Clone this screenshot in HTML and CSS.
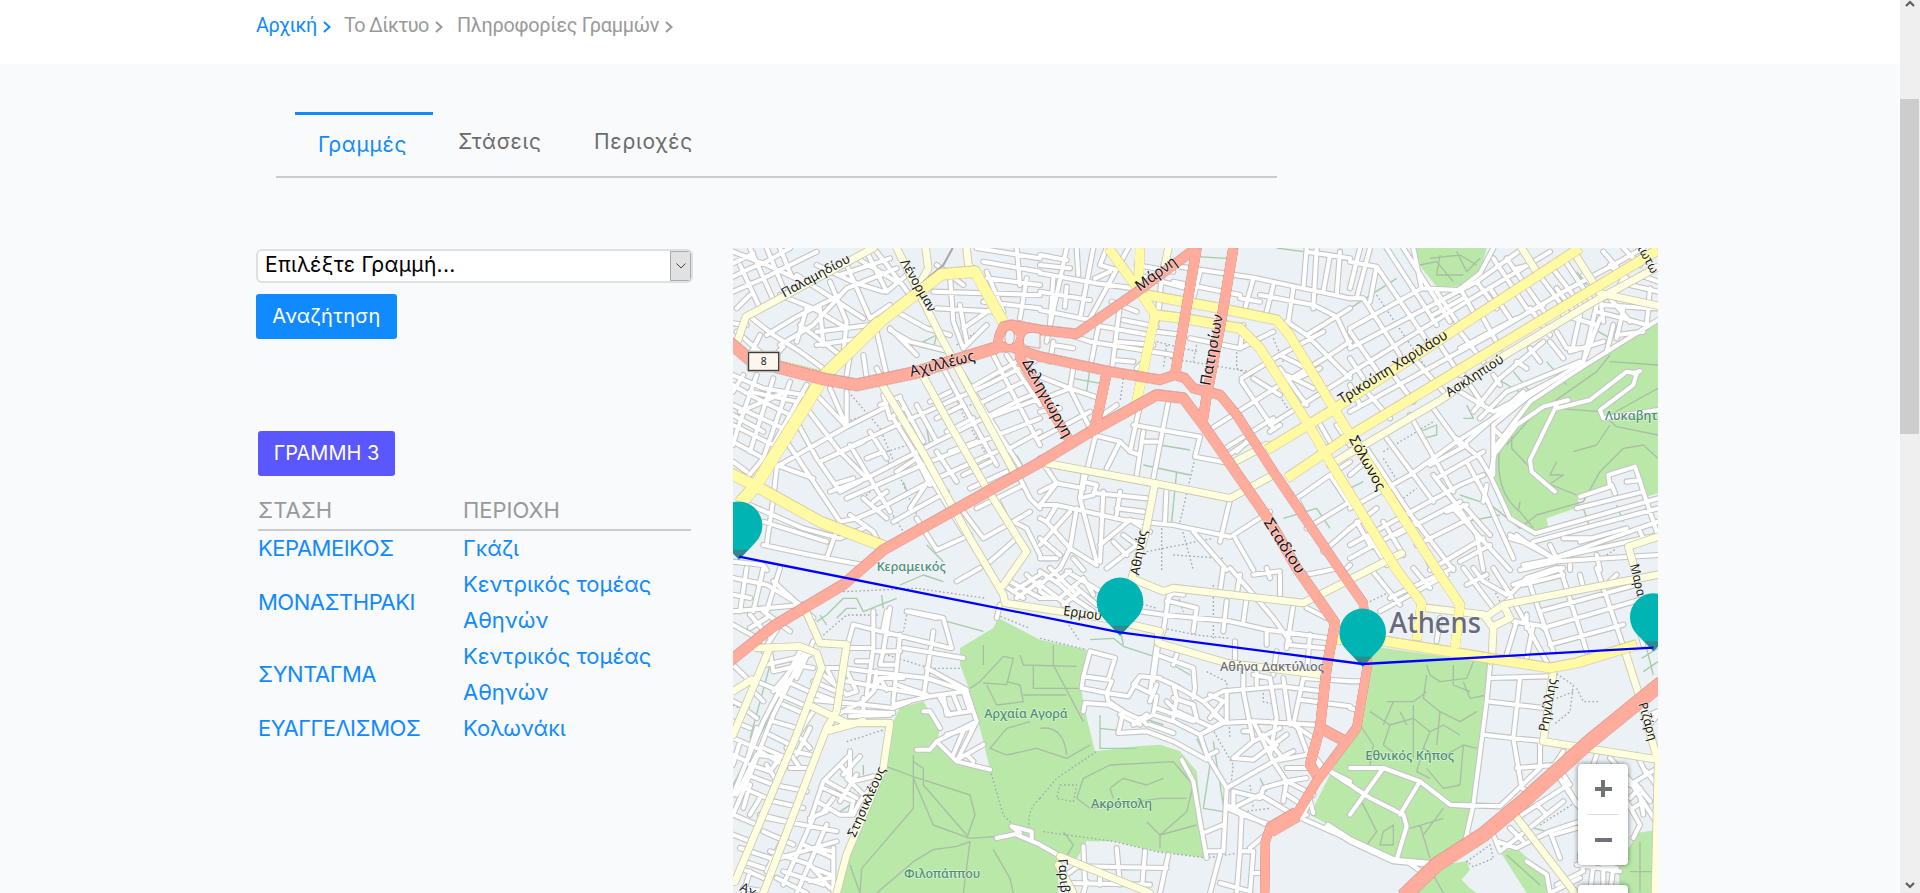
FILE: index.html
```html
<!DOCTYPE html>
<html lang="el">
<head>
<meta charset="utf-8">
<title>Πληροφορίες Γραμμών</title>
<link rel="stylesheet" href="styles.css">
</head>
<body>
<div class="window">
<div class="page">
  <nav class="crumbs">
    <a class="crumb home">Αρχική<svg class="chev" viewBox="0 0 8 12"><path d="M1 1l5.500 5L1 11"/></svg></a>
    <a class="crumb net">Το Δίκτυο<svg class="chev" viewBox="0 0 8 12"><path d="M1 1l5.500 5L1 11"/></svg></a>
    <a class="crumb info">Πληροφορίες Γραμμών<svg class="chev" viewBox="0 0 8 12"><path d="M1 1l5.500 5L1 11"/></svg></a>
  </nav>
  <main class="content">
    <div class="tabs">
      <a class="tab active">Γραμμές</a>
      <a class="tab stops">Στάσεις</a>
      <a class="tab areas">Περιοχές</a>
    </div>
    <div class="columns">
      <section class="side">
        <div class="select"><span class="select-text">Επιλέξτε Γραμμή...</span><span class="select-btn"><svg viewBox="0 0 10 6"><path d="M.5.5L5 5 9.500.5"/></svg></span></div>
        <button class="search">Αναζήτηση</button>
        <div class="line-name">ΓΡΑΜΜΗ 3</div>
        <table class="stations">
          <thead><tr><th class="h-stop">ΣΤΑΣΗ</th><th class="h-area">ΠΕΡΙΟΧΗ</th></tr></thead>
          <tbody>
            <tr><td class="stop">ΚΕΡΑΜΕΙΚΟΣ</td><td>Γκάζι</td></tr>
            <tr><td class="stop">ΜΟΝΑΣΤΗΡΑΚΙ</td><td>Κεντρικός τομέας<br>Αθηνών</td></tr>
            <tr><td class="stop">ΣΥΝΤΑΓΜΑ</td><td>Κεντρικός τομέας<br>Αθηνών</td></tr>
            <tr><td class="stop">ΕΥΑΓΓΕΛΙΣΜΟΣ</td><td>Κολωνάκι</td></tr>
          </tbody>
        </table>
      </section>
      <section class="map">
<svg class="map-svg" viewBox="9 9 2775 1935" width="925" height="645">
  <defs>
    <g id="minor">
      <path d="M9 20L110 60 230 115M9 95L60 70 110 50 180 9M9 140L90 105 260 20M60 9L130 165M110 9L160 130M30 60L90 190M150 9L185 95M9 55L70 25M60 215L130 270 210 320 300 385M20 260L100 330M110 270L200 215 330 150M150 150L250 190 350 250M200 90L400 220M260 60L380 115 460 140M300 110L350 230 340 330M350 60L420 220M230 190L200 290M260 260L420 240M260 300L400 280M150 300L250 240 350 130 500 70M410 20L470 140 530 90M440 20L540 150M9 235L50 240M90 270L60 330M160 305L100 370M210 240L330 330M60 150L20 190M270 190L280 300M420 220L480 180M330 90L480 40M390 45L500 110"/>
      <path d="M9 420L60 450 200 520M9 480L180 560M9 540L150 610M9 590L120 650M40 390L9 440M80 390L20 560 9 600M130 400L60 620M180 410L100 640 50 700M9 650L50 680M9 510L100 560M60 440L200 470M230 420L130 600M30 500L170 440M9 390L100 430 220 450"/>
      <path d="M260 450L350 545M230 490L330 620 410 700M350 440L350 545 140 665M300 430L350 545M200 530L260 640 330 740M170 590L290 770 330 830M140 660L250 700M350 545L460 490M330 620L500 540 770 420 930 340M270 650L400 590M410 700L620 590 880 460 930 440M300 740L410 700M330 830L380 820M330 740L390 710M410 640L460 620M350 760L600 650 930 520M380 820L450 790 620 700 800 620M490 830L650 740M140 670L130 760 110 900M60 780L220 850 330 880 400 850M100 830L290 890M330 830L290 940M100 900L240 930 400 960M360 810L430 860 450 900M400 760L470 820M320 715L370 700M460 450L480 520M450 480L510 455M480 520L520 490M420 560L470 640M360 600L480 800M490 520L620 730 700 860M540 600L600 720M560 640L500 680M560 820L620 915 720 870M600 700L540 790M430 770L470 740M400 330L410 400M440 370L460 410M440 260L470 390M360 330L350 390M480 250L560 330M500 200L590 250 660 270M480 255L540 290 660 320M660 90L670 230 700 310 770 240M610 140L930 150M620 190L800 200M690 180L710 290M620 60L700 120M770 80L820 200M770 100L930 120M740 9L930 40M760 50L930 80M860 9L870 120M890 100L870 220M760 170L930 190M790 130L800 180M700 250L800 180M640 370L700 480 800 660M700 390L760 490 880 680M790 330L840 430 930 600M830 330L930 480M720 430L860 350M740 480L880 410M770 520L930 460M600 470L660 440M620 520L700 480M650 560L730 520M820 620L930 560M660 620L740 590M700 690L780 650M720 730L830 680M620 620L680 710M510 460L580 590M560 480L620 590M870 700L900 760 930 790M740 790L880 720M700 800L760 880 850 830 890 850 930 930M800 760L830 820M850 830L900 800M780 950L860 880M9 950L100 960 110 975"/>
      <g transform="translate(930 0)">
        <path d="M0 30L80 45M0 85L170 115 280 130M0 140L150 165M0 195L150 225M110 9L115 90M80 9L20 290M160 9L120 220M265 9L150 220M200 9L180 60 230 75M165 100L210 80M80 125L75 185M240 180L215 380M180 220L150 370M250 225L350 245M160 240L330 270M150 290L400 330M230 290L340 300M40 290L30 350M60 260L150 290M40 300L100 310M220 345L280 350M215 170L290 200M0 60L90 70M40 100L30 240"/>
        <path d="M100 370L90 430 0 465M0 395L90 430 150 550M90 430L180 460M0 580L150 500M0 500L60 490M160 570L240 590 270 620M165 580L120 760M240 590L200 670M300 480L270 620M310 560L290 690M280 540L480 575M385 470L340 700M480 575L465 635 570 655M310 590L350 590M270 620L300 630M230 480L160 530M320 340L290 370"/>
        <path d="M0 640L50 715 130 730M50 715L0 740M120 760L170 950M130 690L120 760 160 750 170 720 130 710M50 780L250 825 400 840 570 875M190 740L180 950M240 740L230 810M170 745L320 760M230 790L310 800M50 715L0 780 50 780 20 830 0 820M20 830L90 910M0 900L90 800M110 790L90 910 170 960M0 880L60 930M180 900L270 825 330 860M250 870L290 900 200 970M220 890L260 930M460 860L560 975M570 765L540 890M580 870L640 975M580 870L690 800M0 940L50 940M60 970L90 910M100 940L130 975M380 720L375 830"/>
        <path d="M420 65L650 100 930 160M400 110L600 150M310 95L440 130M640 100L610 210M700 120L680 200M760 130L745 230M800 9L790 130M830 9L820 190M870 30L850 140M800 20L930 40M660 150L820 180 890 215M600 160L660 170M800 270L890 215 930 190M890 215L930 300M740 230L800 270 930 400M720 330L850 260M350 260L430 270M360 170L350 230M450 280L600 310 610 240M600 310L660 280 700 260M370 60L350 230M480 80L460 160M900 20L890 150M290 60L400 80"/>
        <path d="M605 400L720 330 800 370 830 400M605 410L700 550M640 400L720 450M500 560L720 420 870 330 930 290M540 620L700 520M550 640L640 580M720 370L800 480M740 390L820 430M690 540L850 440 930 390M720 590L830 520M770 400L840 370M590 620L620 590M770 760L870 690 930 650M770 760L790 800M800 850L930 770M850 920L930 850M870 690L930 780M830 520L870 590M890 540L930 600M860 610L930 570M920 970L930 960M690 560L720 540"/>
      </g>
      <g transform="translate(1860 0)">
        <path d="M0 50L80 65 240 300M60 9L20 160M30 9L0 130M110 9L260 240M160 9L300 230M0 160L40 160 150 330M0 250L215 130 325 135 390 85 430 9M215 130L190 9M0 310L380 110 520 9M0 385L350 170 600 20M0 260L90 390M0 340L40 400M260 140L320 230M330 130L370 200M380 110L440 190M420 130L480 220M430 40L530 190M470 40L590 210M560 80L650 200M600 60L700 190M640 40L720 160M80 65L60 170M250 210L340 160M500 70L540 60M540 200L580 180"/>
        <path d="M0 500L200 390 420 270 640 140 790 60 880 9M50 440L120 520M130 390L190 470M200 350L280 440M270 300L330 390M330 260L400 350M400 220L450 310M330 310L500 220M0 420L30 480M540 190L600 270M620 130L680 210M700 90L760 160M780 60L830 110M760 20L830 100M820 9L870 60"/>
        <path d="M50 610L190 820 310 975M110 580L250 770M180 510L310 740M250 490L330 600M0 790L180 690 320 590 700 350M0 900L330 720 400 690M0 850L80 790M320 580L390 640 420 690M240 660L350 600M260 700L400 620M140 870L330 770M0 940L200 830M250 690L320 780 380 870 400 975M350 650L400 740 490 940M310 790L480 975M290 800L350 780M200 900L360 820M240 975L400 880M400 770L410 720M340 780L420 870M100 830L160 930M60 880L110 960M0 690L60 640M200 870L240 960M20 830L60 900M420 900L330 950"/>
        <path d="M330 440L430 500M370 500L450 400 580 290M390 520L470 440 690 350M350 590L520 440M430 500L640 390M340 390L400 480M430 390L450 420M500 350L530 370M540 310L570 350M600 290L640 340M620 260L650 310 700 310M430 630L430 540 540 450M430 550L450 570M430 640L430 690M690 370L700 350 740 180M750 150L760 230M640 210L740 240M690 210L670 300M740 200L820 220 890 240M760 180L900 190 924 190M790 240L770 320M800 270L880 260M840 120L924 140M820 190L800 280M900 130L890 240M830 70L810 120M870 90L924 110M750 220L700 350M780 160L840 230M660 320L760 290"/>
        <path d="M924 225L690 370 540 470 440 600 420 690 480 820 555 865 924 760M480 880L550 900 610 940 924 870M480 870L610 940M550 890L924 790M600 900L620 940M610 940L924 830M640 880L730 880M500 870L540 900M520 960L600 945M740 930L750 975M600 950L924 930M680 790L880 740M690 755L780 725 775 690 855 665 920 860M785 720L795 745M690 890L830 850M870 860L880 880M660 960L660 975M830 710L870 705M510 975L620 950"/>
        <path d="M655 465L580 485 500 540 440 620M620 480L540 645 545 680 615 740M620 490L720 465 830 380 860 385 850 420 750 495 760 520 924 495M870 378L850 385"/>
      </g>
      <g transform="translate(0 969)">
        <path d="M9 30L110 50 210 110M9 130L220 110M150 0L110 130M100 0L70 130M50 0L30 130M130 40L250 150M9 80L60 90M100 130L180 190M60 140L120 210M9 170L100 220M150 170L100 250M60 180L110 150M9 290L50 330M110 290L240 260M120 250L130 310 220 290M80 340L150 370 210 300M130 370L220 260M70 370L100 400M9 400L50 420"/>
        <path d="M230 240L130 440 60 620 9 740M215 240L100 460 9 680M250 220L200 330"/>
        <path d="M9 460L60 480M9 510L80 540M9 560L50 580 80 480M40 420L80 450M30 520L9 590M130 460L200 480M120 500L180 530M100 540L170 570M90 550L160 590M60 590L120 610 150 570 80 560M50 620L130 650M40 660L110 690M9 740L80 770M9 800L60 820M30 840L120 870M40 880L100 900M30 900L100 930M170 340L280 390M150 380L240 420M190 290L250 300M160 410L230 440M20 680L80 560M60 650L40 720M110 590L140 640M90 690L60 740M130 650L230 670M110 750L320 790M190 750L110 910M250 750L160 950M290 770L200 975M100 790L190 830M120 850L240 890 300 960M150 870L320 820M160 910L280 950M240 840L310 850M310 840L310 975M220 830L310 870M90 740L170 760M130 700L220 720M200 500L240 540M190 550L240 560M180 600L230 600M240 480L200 560M210 600L170 540M250 430L210 490M40 960L100 970M60 910L40 975M140 930L230 975M250 900L300 920M240 940L300 930"/>
        <path d="M270 300L330 300M280 320L350 380 380 370 350 310M290 300L310 340M240 370L320 400M250 340L320 370M240 395L400 410 490 420 540 400M320 440L400 400 430 370 450 330 520 330M350 430L490 435M360 445L480 440M400 390L400 450M340 300L410 310 590 330 710 370M350 340L580 380M360 240L420 240M370 170L660 240M370 170L350 240M430 130L430 240 410 380M480 120L460 250 450 290M460 180L470 130M540 130L640 150 665 240M530 130L620 150M510 200L490 400M610 190L580 390M450 330L470 365M590 300L710 365M500 350L590 380M450 290L500 290M380 280L420 280M440 310L430 370M520 240L700 270M440 250L510 250M490 410L600 385 710 370 740 460M640 380L650 440 720 430M670 380L690 430M700 370L720 430M630 390L660 440M580 430L600 430 630 480M560 545L600 545 620 520 740 460M620 520L680 580 780 605M700 490L670 560M740 460L680 580M650 500L720 480M690 570L760 530M710 560L730 580M330 430L300 470"/>
        <path d="M360 560L280 640 240 760M280 660L370 700 360 740M330 590L370 640 430 625M360 550L360 620M390 565L340 620M290 640L380 690M380 620L330 700M260 700L330 740 370 740 390 700 430 650M310 690L280 730M240 750L290 730M350 630L400 680M680 40L750 0M820 50L880 90M840 40L930 90M850 70L930 20M860 90L930 40M800 150L810 110M890 20L930 60"/>
        <path d="M800 810L870 795 845 775 905 790 905 815M860 800L930 830 1000 870"/>
      </g>
      <g transform="translate(930 969)">
        <path d="M0 10L60 50 100 90M0 50L80 110M0 90L60 90 130 30M30 0L110 80M60 0L0 50M80 10L180 70M110 60L170 110M130 30L160 80M50 40L90 10M100 90L160 130M70 110L120 70M0 70L30 90"/>
        <path d="M390 60L370 190 355 225 340 340M300 130L370 140 570 160 680 185 860 210M390 100L470 120 460 190M390 75L430 80M400 70L380 100M560 100L550 190M620 90L610 160M550 0L540 70M600 20L590 80M570 0L640 80 700 150 750 220M690 30L680 0M720 20L720 80M640 20L720 10M760 110L740 240M800 120L860 150M810 200L800 320M680 185L680 230M585 220L585 280M710 250L700 320M800 20L900 0M740 230L850 240"/>
        <path d="M150 250L225 270 205 335 130 325 150 250M130 325L125 360 200 375 265 385 300 325 360 330M300 325L280 350 330 375 350 230M200 375L205 400 250 430 235 495 320 490 400 520 500 575M130 430L135 405 205 410 290 450M215 340L200 375M350 260L460 300 465 360 460 390M355 330L400 350 490 400 550 460 520 440M410 260L400 290M350 350L330 400M350 385L340 440 280 470 320 440M340 440L400 460 480 500M400 390L460 410 470 450M380 400L410 430 520 480M410 390L400 450M490 400L550 370 720 355 850 370M510 380L550 400 510 450M560 370L560 460M350 420L460 460M300 450L320 470M240 440L300 470M330 470L400 495M400 350L410 390"/>
        <path d="M480 500L550 465 640 460 820 470M480 500L500 560 560 660 550 850M610 310L610 370 640 520M690 330L710 450 690 560M730 330L750 470M790 330L760 470M640 320L690 330M550 460L480 500M650 310L650 350M780 395L930 415M790 330L930 340M580 570L640 520 720 480M580 570L640 575 740 500M640 460L700 580 800 560 850 610M560 660L700 580 760 550M700 580L740 640 820 680M740 600L830 600M670 660L740 640 800 630M670 660L660 690 580 670 580 710M560 710L700 780 730 750M580 720L660 680 760 740 800 740M740 640L730 700M670 500L720 560M770 470L800 550 820 560M690 550L710 530M510 560L530 550M610 490L630 490M760 470L820 510M740 680L800 720M820 560L850 600M870 610L930 650M700 780L630 840M605 740L600 850 640 850 630 975M600 850L590 975M500 850L550 850M490 795L550 770M560 720L605 740 690 770M640 915L670 915"/>
        <path d="M425 575L460 640 480 760 500 870M130 835L135 940M230 840L240 950M315 850L305 975M385 860L360 975M110 895L380 900M80 945L330 950M80 920L120 890M540 860L510 975M540 945L630 970M180 900L180 950M140 940L130 975"/>
        <path d="M760 740L930 815M790 745L840 610M820 735L810 700M870 610L930 640"/>
      </g>
      <g transform="translate(1860 969)">
        <path d="M60 0L150 110M90 130L290 20M120 90L160 70 310 0M190 0L240 60M280 30L250 0M340 0L430 120M370 0L400 40 470 80M430 0L480 80 530 30 620 0M480 80L600 300M540 50L610 250M630 0L710 250M570 130L860 50M580 180L870 95M600 230L820 170M640 20L520 50M740 0L825 250M490 50L640 0M350 50L410 20M490 160L580 175M500 160L470 260M550 170L530 270M530 140L530 180M270 150L260 220M690 20L700 60M480 90L460 110M770 50L800 20M860 160L880 230"/>
        <path d="M420 290L410 400 370 710 345 820M420 330L600 325M410 400L580 420M400 500L580 520M510 330L490 510 515 660M500 600L620 590 660 650M570 530L570 600 450 715 300 710 210 640 100 600 0 600M515 660L550 680M640 550L600 610M740 560L730 590M300 710L370 715M610 600L680 710M350 800L390 810M560 710L590 740M500 750L640 660M640 640L690 720M430 800L450 850 640 700M440 820L500 840 600 790 690 760M600 790L630 870M480 780L520 820M530 880L590 920 600 975M610 800L680 780M620 950L700 910 690 870 800 900M610 970L690 930M690 860L800 870M680 890L810 910M730 890L720 975M760 890L760 975M790 900L780 975M840 640L924 770M870 660L840 690M870 680L880 740M840 650L924 600M830 700L870 770 850 810M780 570L860 660M850 720L880 700M860 560L890 620M890 610L924 660M900 700L860 650M890 480L924 440M900 440L924 430M0 340L30 340M0 420L20 425"/>
        <path d="M100 600L0 740M0 650L60 690 160 740 170 775 140 875M210 640L150 740M-60 610L60 690"/>
        <path d="M-70 775L0 820 130 880 240 890M-66 770L4 815 134 875 240 884M170 880L220 915"/>
      </g>
    </g>
    <g id="light">
      <path d="M20 295L48 215 150 160 430 9M500 9L560 130 640 290 690 380 860 695M460 425L580 625 720 880 820 1049 825 1074 1120 1119 1290 1159M575 385L660 540 770 730 890 920 820 1020M587 9L595 70 570 115M710 9L715 60 735 80"/>
      <path d="M950 655L1275 715 1500 760 1630 690M1275 715L1245 870 1205 1000 1300 1039 1330 1029 1720 1074 1850 1009 2015 925M1505 655L1610 600M1315 9L1305 60M1285 1159L1285 1194 1490 1254 1770 1289"/>
      <path d="M1860 625L2140 460 2325 330 2600 165 2784 65M2375 9L2420 80M2540 35L2610 145 2784 182M2784 875L2695 905 2715 975M1800 660L1880 610"/>
      <path d="M230 1104L270 1194 350 1199 320 1399 290 1449 100 1944M80 1209L210 1204 260 1224 275 1269 200 1469 15 1910M9 1470L115 1219M9 1339L65 1304M235 1379L350 1434 480 1434 460 1569 350 1829 320 1944M290 1459L400 1429"/>
      <path d="M990 1834L1260 1944M985 1860L1030 1944M2090 1089L2260 1109 2290 1149 2285 1249M2270 1114L2320 1079 2784 989M2320 1079L2340 1119 2290 1144M2685 1219L2730 1359 2784 1549M2470 1279L2440 1489 2784 1544M2350 1704L2535 1944M2784 1560L2775 1944"/>
    </g>
    <g id="yellow">
      <path stroke-width="37" d="M30 775L75 725 175 565 280 395 450 230"/>
      <path stroke-width="32" d="M445 235L635 88 735 80 830 250M0 685L75 722 270 830 465 905"/>
      <path d="M1135 9L1230 140 1275 210 1218 480M1230 9L1225 140M1250 150L1470 190 1640 225 1675 265 1860 570 1970 740 2120 975 2190 1079 2175 1209M1275 210L1360 220 1530 250 1590 310 1730 530 1800 650 2000 975 2075 1074 2060 1185"/>
      <path d="M1610 615L1800 500 2550 9M1670 700L1860 572 2784 15M1800 1184L1935 1184 2460 1269 2540 1254 2720 1199"/>
    </g>
    <g id="red">
      <path stroke-width="34" d="M0 293L60 345 280 402 380 420 560 382 800 308"/>
      <path stroke-width="27" d="M800 308L808 270 820 245 845 240 930 255 1040 267 1215 145 1400 9M800 308L840 305 930 335 1140 380 1290 405 1335 390 1365 400 1390 430 1470 450 1520 510 1630 680 1830 975 1900 1075 1913 1259 1880 1449 1760 1609 1700 1709 1620 1749 1606 1790 1604 1944M845 240L878 268 865 305 870 340 1022 592"/>
      <path stroke-width="30" d="M0 1249L130 1144 340 1019 460 915 930 652 1090 555 1280 450 1360 460 1420 540 1620 830 1700 969 1815 1134 1790 1269 1770 1449 1740 1559 1760 1589M1400 9L1335 390M1510 9L1475 220 1428 465 1418 530M1130 385L1095 550M1770 1449L1845 1489"/>
      <path stroke-width="42" d="M2794 1315L2580 1489 2380 1669 2260 1769 2120 1859 2020 1955M1700 1709L1620 1755"/>
    </g>
    <g id="pin"><path fill="#00b4b4" d="M0 0L-48-50A70 72 0 1 1 48-50Z"/><path fill="#31898c" d="M0 0L-27-30H27Z"/></g>
  </defs>

  <path fill="#ebf1f4" d="M9 9H2784V1944H9Z"/>

  <g class="parks">
    <path d="M2784 235L2640 320 2510 400 2400 480 2340 540 2290 620 2280 690 2330 800 2410 858 2455 855 2450 820 2550 785 2540 755 2630 720 2635 690 2720 665 2750 755 2784 745Z"/>
    <path d="M2055 9L2075 70 2120 125 2185 125 2250 80 2270 9Z"/>
    <path d="M805 1119L930 1184 1070 1214 1055 1339 1065 1399 1095 1519 1220 1504 1290 1499 1350 1519 1400 1579 1430 1839 1280 1819 1150 1789 1070 1789 1030 1859 985 1840 985 1944H320L360 1789 460 1569 480 1449 510 1389 580 1369 630 1449 620 1499 680 1549 780 1574 760 1489 720 1339 690 1259 690 1209 790 1149Z"/>
    <path d="M1925 1204L2275 1254 2210 1784 2110 1854 2000 1849 1740 1709 1810 1569 1880 1449Z"/>
    <path d="M2130 1860L2210 1849 2220 1874 2195 1904 2220 1929 2240 1944H2050Z"/>
    <path d="M2310 1819L2360 1809 2445 1889 2450 1944H2390Z"/>
    <path d="M2720 1764L2784 1754V1944H2670L2665 1869Z"/>
  </g>
  <path class="field" d="M1860 1795L2070 1875 1990 1944H1630V1790L1700 1740Z"/>

  <g class="trails">
    <path d="M2270 770L2370 850 2420 810 2560 770 2610 680 2680 610 2740 600 2784 640M2310 600Q2290 740 2370 800L2410 850M2345 540V610L2440 710 2540 750M2640 330L2600 380 2400 520 2330 600M2784 360L2640 350M2784 570L2660 545 2610 500 2480 490M2640 540L2600 600 2530 620M2480 650L2460 690 2500 690 2455 720M2784 430L2640 510M2370 770L2365 800M2070 60L2120 50 2170 110M2100 40L2190 30 2240 60M2130 30L2120 90 2200 90M2180 20L2210 80 2250 40"/>
    <path d="M550 1530V1690L395 1870 390 1944M550 1600L610 1740 720 1780 860 1770M470 1565L550 1595 720 1650 735 1710 710 1780M550 1550L580 1570 580 1620 710 1770M440 1944L550 1850 610 1814 680 1804 720 1790 700 1944M790 1814L840 1900 850 1944M720 1330L750 1310 820 1234 850 1240 830 1319 760 1314M770 1320L800 1380 880 1370 870 1320 830 1310M870 1230L880 1260 1040 1264M910 1264V1330H1050M880 1350H1010M900 1430L830 1450 780 1510 830 1530 920 1510 1010 1540 1080 1500M970 1200V1260L1060 1430M930 1450Q1000 1440 1010 1530M1040 1660L1060 1600 1140 1560 1330 1550 1390 1620 1370 1700 1290 1770 1290 1810M1040 1660L1080 1690 1290 1660 1370 1660M1140 1630L1180 1600 1250 1620 1300 1600M1140 1630L1150 1660M1250 1730L1290 1770 1400 1740M760 1200V1260M390 1944L360 1860M1000 1760L1030 1800 1000 1850"/>
    <path d="M2090 1260L2100 1290 2130 1310 2210 1300 2230 1250M1970 1370L2050 1370 2090 1340M1920 1400L1980 1440 1960 1500 2000 1530M2090 1290L2080 1360 2130 1400 2190 1430 2240 1400M1980 1440L2050 1420 2100 1460 2080 1510 2130 1540 2200 1500 2240 1510M2050 1380V1540M2100 1460L2140 1440 2190 1470M2130 1400L2120 1500M2200 1310L2220 1360 2270 1350M2200 1500L2190 1620 2140 1630 2090 1570M1890 1440L1930 1500 1920 1560M1990 1370L1960 1440M2080 1510L2060 1580 2100 1600M2170 1260V1320L2220 1340M2010 1400L2030 1440M1890 1660L1940 1760 1910 1800M2040 1750L2140 1720M2070 1740L2100 1840M1960 1760L1990 1740 1990 1800 1950 1800ZM2140 1690L2080 1770M2140 1944L2110 1890M2330 1830L2430 1920M2700 1880H2784M2730 1790V1940"/>
  </g>
  <g class="green-trails">
    <path d="M580 290L620 270 610 310ZM590 550L600 600M460 620L480 660M520 710L535 750M860 630L880 665M590 900L640 950M855 830L890 810M1400 35L1490 40M1030 400L1110 415M1080 370L1070 440M1290 600L1380 615M1240 660L1380 690M1340 680L1325 830M1660 820L1760 790M1760 790L1800 850M1640 9L1720 20M1860 190L2000 100M2210 480L2230 520 2200 520M2070 560L2120 540 2120 570 2080 580ZM1860 730L1900 710M2300 400L2400 460M2350 380L2400 440M2450 350L2510 420M2190 750L2250 770M2210 830L2310 810M2590 250L2640 280M2540 80L2570 120M2560 790L2580 850M2660 780L2680 830"/>
    <path d="M260 1130L290 1110 340 1060 380 1060 400 1100 500 1060M290 1140L270 1110M320 1120L350 1090 380 1090M455 1050L460 1090M510 1020L580 990 640 1010M650 1129L760 1159M9 1620L220 1230M120 1260L60 1480M1080 1184L1150 1180 1180 1204 1290 1240M1170 1150L1180 1200M1400 1480L1440 1560 1420 1690 1480 1700M1450 1490L1480 1680M1330 1260L1380 1290M1110 1410V1510H1220M1110 1450L1200 1460M1590 1600L1610 1640M1300 1310L1350 1320M1180 1400L1300 1440M2735 1240L2784 1210M2740 1280L2784 1250M2750 1210L2770 1290M360 1680L330 1700M400 1590V1560M2380 1740L2450 1760"/>
  </g>
  <g class="dots">
    <path d="M355 440L450 550 520 720 570 830M350 530L480 485M640 370L700 510 780 650M660 490L780 470M470 620L550 595M360 640L420 700 520 860M500 770L610 710M400 760L450 710M680 300L740 260M1280 290L1400 320M1310 300L1300 370M1320 340L1560 380M1400 300L1390 350M1520 310L1520 370 1640 440 1680 500M1395 640L1350 830 1390 975M1180 400L1170 470M1295 850V975M1250 920L1450 880M1330 930L1480 940M1630 280L1660 350M1940 150L2130 430M1960 620L2110 530M1960 640L2010 720M2020 760L2060 730M2600 950L2660 910"/>
    <path d="M280 1170L350 1110 450 1110M340 1040L560 1030 770 1060M530 1110L520 1160M440 1220L600 1270 690 1270M350 1490L460 1455M780 1574L820 1710 850 1740M930 1660Q880 1700 905 1780M930 1660L980 1600 1100 1519M940 1760L1150 1789 1280 1820 1430 1839 1520 1825M990 1620L1040 1620 1030 1670 980 1660ZM930 1180L1070 1214M800 1110L900 1150M1010 1130L1050 1190M1110 1040L1280 1090M1340 1040L1360 1100M1450 1020V1180M1300 1150L1400 1170 1500 1180M1430 1280L1490 1310 1500 1480M1600 1320V1370L1640 1380M1440 1440L1510 1560 1500 1640M1560 1620L1570 1690M1540 1700L1620 1690M2470 1280L2530 1320 2520 1400 2470 1440M2540 1330L2560 1370H2610M2480 1360L2530 1340M2430 1740L2540 1670M1920 1070L1980 1040M2270 990L2310 1070M2210 1850L2280 1800 2290 1840 2230 1865ZM9 1380L100 1420"/>
  </g>

  <use href="#minor" class="casing minor-casing"/>
  <use href="#minor" class="fill minor-fill"/>
  <use href="#light" class="casing light-casing"/>
  <use href="#light" class="fill light-fill"/>
  <path class="rail" d="M580 110L640 60 668 9"/>
  <path class="side-lane" d="M150 348L300 384M140 382L280 416"/>
  <use href="#yellow" class="fill yellow-fill"/>
  <use href="#red" class="fill red-fill"/>
  <path fill="#ebf1f4" stroke="#d28078" stroke-width="2" d="M825 275q3-22 17-20 12 3 11 22-1 22-15 22-15-2-13-24ZM880 290q0-30 28-28l22 3v45l-35-6q-15-3-15-14Z"/>

  <g class="labels">
    <text transform="translate(163 158) rotate(-28.500)" textLength="228" lengthAdjust="spacingAndGlyphs" font-size="39">Παλαμηδίου</text>
    <text transform="translate(510 52) rotate(60)" textLength="175" lengthAdjust="spacingAndGlyphs" font-size="39">Λένορμαν</text>
    <text transform="translate(543 395) rotate(-14)" textLength="200" lengthAdjust="spacingAndGlyphs" font-size="46">Αχιλλέως</text>
    <text transform="translate(876 352) rotate(61)" textLength="262" lengthAdjust="spacingAndGlyphs" font-size="44">Δεληγιώργη</text>
    <text transform="translate(1229 140) rotate(-36)" textLength="142" lengthAdjust="spacingAndGlyphs" font-size="45">Μάρνη</text>
    <text transform="translate(1441 424) rotate(-80)" textLength="216" lengthAdjust="spacingAndGlyphs" font-size="45">Πατησίων</text>
    <text transform="translate(1836 478) rotate(-32)" textLength="378" lengthAdjust="spacingAndGlyphs" font-size="43">Τρικούπη Χαριλάου</text>
    <text transform="translate(2158 457) rotate(-33)" textLength="198" lengthAdjust="spacingAndGlyphs" font-size="40">Ασκληπιού</text>
    <text transform="translate(1856 582) rotate(61)" textLength="180" lengthAdjust="spacingAndGlyphs" font-size="42">Σόλωνος</text>
    <text transform="translate(1600 832) rotate(57)" textLength="188" lengthAdjust="spacingAndGlyphs" font-size="45">Σταδίου</text>
    <text transform="translate(1227 992) rotate(-80)" textLength="136" lengthAdjust="spacingAndGlyphs" font-size="39">Αθηνάς</text>
    <text transform="translate(998 1110) rotate(8)" textLength="117" lengthAdjust="spacingAndGlyphs" font-size="40">Ερμού</text>
    <text transform="translate(375 1779) rotate(-66)" textLength="226" lengthAdjust="spacingAndGlyphs" font-size="38">Στησικλέους</text>
    <text transform="translate(985 1843) rotate(86)" font-size="39">Γαριβ</text>
    <text transform="translate(27 1936) rotate(24)" font-size="39">Αχ</text>
    <text transform="translate(2722 9) rotate(62)" font-size="38">ιωτω</text>
    <text transform="translate(2700 960) rotate(77)" textLength="98" lengthAdjust="spacingAndGlyphs" font-size="38">Μαρα</text>
    <text transform="translate(2725 1376) rotate(74)" textLength="118" lengthAdjust="spacingAndGlyphs" font-size="38">Ριζάρη</text>
    <text transform="translate(2452 1461) rotate(-80)" textLength="160" lengthAdjust="spacingAndGlyphs" font-size="38">Ρηγίλλης</text>
    <g class="park-labels">
      <text x="440" y="977" textLength="207" lengthAdjust="spacingAndGlyphs">Κεραμεικός</text>
      <text x="763" y="1418" textLength="250" lengthAdjust="spacingAndGlyphs">Αρχαία Αγορά</text>
      <text x="1083" y="1690" textLength="183" lengthAdjust="spacingAndGlyphs">Ακρόπολη</text>
      <text x="522" y="1899" textLength="229" lengthAdjust="spacingAndGlyphs">Φιλοπάππου</text>
      <text x="1906" y="1546" textLength="266" lengthAdjust="spacingAndGlyphs">Εθνικός Κήπος</text>
      <text x="2625" y="526" textLength="158" lengthAdjust="spacingAndGlyphs">Λυκαβητ</text>
    </g>
    <text class="ring" x="1470" y="1279" textLength="312" lengthAdjust="spacingAndGlyphs">Αθήνα Δακτύλιος</text>
    <text class="city" x="1978" y="1163" textLength="275" lengthAdjust="spacingAndGlyphs">Athens</text>
  </g>
  <rect x="55" y="322" width="92" height="55" rx="3" fill="#fdf6ee" stroke="#bbb5ac" stroke-width="9"/>
  <rect x="56" y="323" width="90" height="53" fill="#fdf6ee" stroke="#222" stroke-width="3"/>
  <text class="shield" x="101" y="361">8</text>

  <use href="#pin" x="27" y="944"/><use href="#pin" x="1170" y="1172"/><use href="#pin" x="1898" y="1265"/><use href="#pin" x="2770" y="1219"/>
  <path class="route" d="M27 935L1170 1162 1898 1257 2770 1208"/>
</svg>
        <div class="zoom"><span class="plus"></span><span class="rule"></span><span class="minus"></span></div>
        <div class="zoom second"></div>
      </section>
    </div>
  </main>
</div>
<div class="scrollbar">
  <svg class="arrow" viewBox="0 0 10 7"><path d="M1 6l4-4 4 4"/></svg>
  <div class="thumb"></div>
  <svg class="arrow down" viewBox="0 0 10 7"><path d="M1 1l4 4 4-4"/></svg>
</div>
</div>
</body>
</html>
```

FILE: styles.css
```css
* { box-sizing: border-box; }
body { margin: 0; background: #f8fafc; }
.window { display: flex; height: 893px; overflow: hidden; font-family: Inter, "Noto Sans", sans-serif; }
.page { width: 1900px; height: 893px; overflow: hidden; border-right: 1px solid #fff; }

.crumbs { display: flex; align-items: flex-start; height: 64px; padding: 10px 0 0 256px; background: #fff; font: 19.8px/32px Roboto, sans-serif; letter-spacing: -.1px; color: #999; }
.crumb { display: flex; align-items: center; white-space: nowrap; }
.home { width: 88px; letter-spacing: -.5px; color: #128aff; }
.net { width: 113px; letter-spacing: -.7px; }
.info { letter-spacing: -.25px; }
.chev { width: 8px; height: 12px; margin-left: 6px; margin-top: 2px; fill: none; stroke: currentColor; stroke-width: 2; }

.tabs { display: flex; align-items: flex-start; width: 1001px; height: 66px; margin: 48px 0 0 276px; padding-left: 19px; border-bottom: 2px solid #c9cbcd; font-size: 21px; line-height: 30px; letter-spacing: .75px; color: #6b6b6b; }
.tab { padding: 15px 24px 0; white-space: nowrap; }
.active { width: 138px; padding: 15px 0 0 23px; border-top: 3px solid #128aff; color: #128aff; }
.stops { width: 137px; padding-left: 25px; }

.columns { display: flex; margin-top: 70px; padding-left: 256px; }
.side { width: 477px; }
.select { display: flex; justify-content: space-between; width: 437px; height: 34px; margin-top: 1px; padding: 0; border: 2px solid #e0e0e0; border-radius: 6px; background: #fff; overflow: hidden; }
.select-text { padding-left: 7px; font-size: 21px; line-height: 28px; letter-spacing: .3px; }
.select-btn { display: flex; align-items: center; justify-content: center; width: 21px; border: 1px solid #adadad; background: #e1e1e1; }
.select-btn svg { width: 10px; height: 6px; fill: none; stroke: #444; stroke-width: 1; }
.search { display: block; width: 141px; height: 45px; margin-top: 11px; padding: 0; border: 0; border-radius: 3px; background: #128aff; color: #fff; font: 20px/45px Inter, sans-serif; letter-spacing: .35px; }
.line-name { width: 137px; height: 45px; margin: 92px 0 0 2px; border-radius: 3px; background: #5a57ff; color: #fff; font-size: 20px; line-height: 45px; text-align: center; }
.stations { width: 433px; margin: 16px 0 0 2px; border-collapse: collapse; table-layout: fixed; font-size: 22px; line-height: 36px; color: #128aff; }
.stations th { height: 38px; padding: 0 0 1px; border-bottom: 2px solid #c9cbcd; font-weight: 400; text-align: left; color: #999; white-space: nowrap; }
.stations td { position: relative; top: -1px; padding: 0; white-space: nowrap; }
.stations .stop { letter-spacing: -.5px; }
.h-stop { width: 205px; }

.map { position: relative; width: 925px; height: 645px; overflow: hidden; }
.map-svg { display: block; }
.map-svg text { font-family: "Noto Sans", sans-serif; }
.parks { fill: #b9e8a9; }
.field { fill: #ebf1f4; }
.trails, .green-trails, .dots { fill: none; stroke-linejoin: round; }
.trails { stroke: #a9bda5; stroke-width: 4; }
.green-trails { stroke: #a5cda8; stroke-width: 4; }
.dots { stroke: #a3a8ad; stroke-width: 4; stroke-dasharray: 5 7; }
.casing, .fill { fill: none; stroke-linecap: round; stroke-linejoin: round; }
.minor-casing { stroke: #c4c4c4; stroke-width: 18.500; }
.minor-fill { stroke: #fff; stroke-width: 12; }
.light-casing { stroke: #c9c9ad; stroke-width: 25; }
.light-fill { stroke: #ffffe0; stroke-width: 20; }
.yellow-fill { stroke: #fffaa3; stroke-width: 28; stroke-linecap: butt; filter: drop-shadow(0 1.500px 0 #d3bd8e) drop-shadow(0 -1.500px 0 #d3bd8e); }
.red-fill { stroke: #ffac9c; stroke-linecap: butt; filter: drop-shadow(0 1.500px 0 #d58a86) drop-shadow(0 -1.500px 0 #d58a86); }
.rail { fill: none; stroke: #a7a7a7; stroke-width: 6; }
.side-lane { fill: none; stroke: #d8d48c; stroke-width: 5; stroke-dasharray: 6 3; }
.labels text { fill: #15171f; paint-order: stroke; stroke: rgba(255,255,255,.45); stroke-width: 5; }
.labels .park-labels text { font-size: 37px; font-weight: 500; fill: #4c8f72; }
.labels .ring { font-size: 38px; font-weight: 500; fill: #6c6d7c; }
.labels .city { font-size: 84px; font-weight: 500; fill: #68687f; }
.shield { font-size: 31px; text-anchor: middle; fill: #222; }
.route { fill: none; stroke: #0000ff; stroke-width: 7; }

.zoom { position: absolute; left: 845px; top: 516px; display: flex; flex-direction: column; align-items: center; width: 50px; height: 101px; border-radius: 4px; background: #fff; box-shadow: 0 0 5px rgba(0,0,0,.5); }
.second { top: 637px; }
.plus { width: 17px; height: 17px; margin-top: 16px; background: linear-gradient(#6f7378, #6f7378) center / 17px 4px no-repeat, linear-gradient(#6f7378, #6f7378) center / 4px 17px no-repeat; }
.rule { width: 32px; height: 1px; margin-top: 17px; background: #ddd; }
.minus { width: 17px; height: 4px; margin-top: 23px; background: #6f7378; }

.scrollbar { display: flex; flex-direction: column; justify-content: space-between; width: 20px; height: 893px; background: #efefef; }
.arrow { width: 10px; height: 7px; margin-left: 5px; fill: none; stroke: #5f5f5f; stroke-width: 2.200; flex: none; }
.thumb { width: 19px; height: 335px; margin-top: 92px; margin-bottom: auto; background: #cdcdcd; }
.down { margin-bottom: 4px; }
```
